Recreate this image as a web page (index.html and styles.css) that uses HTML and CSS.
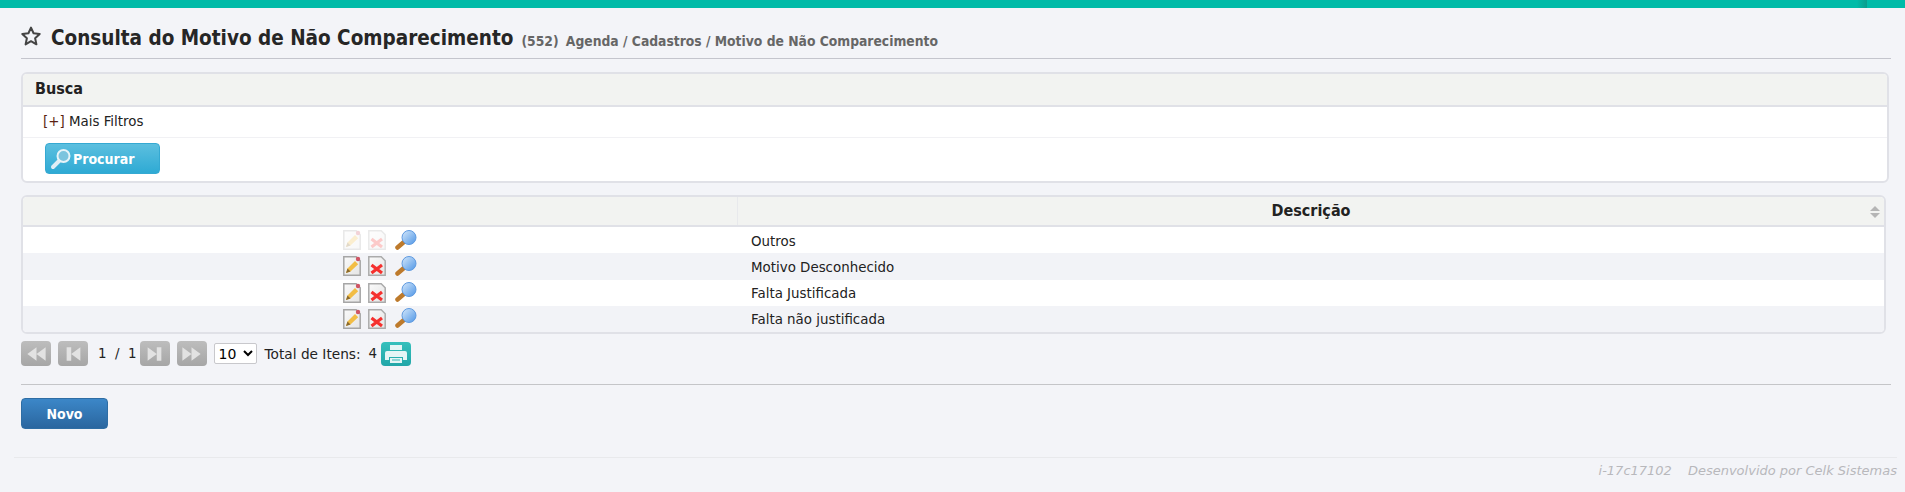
FILE: index.html
```html
<!DOCTYPE html>
<html lang="pt-BR">
<head>
    <meta charset="UTF-8">
    <title>Consulta do Motivo de Não Comparecimento</title>
    <link rel="stylesheet" href="styles.css">
</head>
<body>
    <svg class="defs" width="0" height="0">
        <defs>
            <linearGradient id="glass" x1="0" y1="0" x2="1" y2="1">
                <stop offset="0" stop-color="#d5e8fb"/>
                <stop offset="1" stop-color="#4f96e6"/>
            </linearGradient>
            <linearGradient id="sheet" x1="0" y1="0" x2="1" y2="1">
                <stop offset="0" stop-color="#fafafa"/>
                <stop offset="1" stop-color="#e4e4e4"/>
            </linearGradient>
            <symbol id="ico-edit" viewBox="0 0 18 20">
                <path d="M.8.8h12.400l4 4v14.400H.8z" fill="url(#sheet)" stroke="#a6a6a6" stroke-width="1.500"/>
                <path d="M3 17l1.500-4.500L12 5l3.200 3.200L7.500 15.500z" fill="#f2bd45"/>
                <path d="M3 17l1.500-4.500 3 3z" fill="#8a6a30"/>
                <circle cx="15" cy="3" r="2.200" fill="#cf5564"/>
            </symbol>
            <symbol id="ico-del" viewBox="0 0 18 20">
                <path d="M.8.8h12.400l4 4v14.400H.8z" fill="url(#sheet)" stroke="#ababab" stroke-width="1.500"/>
                <path d="M3.500 9l10.500 8M14 9L3.500 17" stroke="#f5302e" stroke-width="3.200"/>
            </symbol>
            <symbol id="ico-lupa" viewBox="0 0 22 20">
                <path d="M2.500 17.500l7-6" stroke="#bd7a2c" stroke-width="4.500" stroke-linecap="round"/>
                <circle cx="14" cy="7.500" r="7" fill="url(#glass)" stroke="#5f9ae0"/>
            </symbol>
        </defs>
    </svg>

    <div class="topbar"><span class="topbar-mark"></span></div>

    <div class="page">
        <div class="title-row">
            <svg class="star" viewBox="0 0 24 24" width="22" height="22">
                <path d="M12 2.800l2.800 6.200 6.700.8-5 4.600 1.400 6.700L12 17.700 6.100 21.100l1.400-6.700-5-4.600 6.700-.8z" fill="none" stroke="#444" stroke-width="2.200" stroke-linejoin="round"/>
            </svg>
            <h1>Consulta do Motivo de Não Comparecimento</h1>
            <span class="crumbs"><span class="code">(552)</span> Agenda / Cadastros / Motivo de Não Comparecimento</span>
        </div>

        <div class="panel">
            <div class="panel-head">Busca</div>
            <div class="panel-row"><span class="toggle">[+]</span> Mais Filtros</div>
            <div class="panel-actions">
                <button class="btn-search">
                    <svg viewBox="0 0 22 22" width="22" height="22">
                        <path d="M3 19l6-6" stroke="#dfeef5" stroke-width="4" stroke-linecap="round"/>
                        <circle cx="13.500" cy="8" r="6" fill="#7cc4de" stroke="#e6f3f8" stroke-width="2"/>
                    </svg>
                    Procurar
                </button>
            </div>
        </div>

        <div class="grid">
            <div class="grid-head">
                <div class="col-actions"></div>
                <div class="col-desc">
                    Descrição
                    <span class="sort"><i class="up"></i><i class="down"></i></span>
                </div>
            </div>
            <div class="grid-row faded">
                <div class="col-actions">
                    <svg class="ico"><use href="#ico-edit"/></svg>
                    <svg class="ico"><use href="#ico-del"/></svg>
                    <svg class="ico-l"><use href="#ico-lupa"/></svg>
                </div>
                <div class="col-desc">Outros</div>
            </div>
            <div class="grid-row alt">
                <div class="col-actions">
                    <svg class="ico"><use href="#ico-edit"/></svg>
                    <svg class="ico"><use href="#ico-del"/></svg>
                    <svg class="ico-l"><use href="#ico-lupa"/></svg>
                </div>
                <div class="col-desc">Motivo Desconhecido</div>
            </div>
            <div class="grid-row">
                <div class="col-actions">
                    <svg class="ico"><use href="#ico-edit"/></svg>
                    <svg class="ico"><use href="#ico-del"/></svg>
                    <svg class="ico-l"><use href="#ico-lupa"/></svg>
                </div>
                <div class="col-desc">Falta Justificada</div>
            </div>
            <div class="grid-row alt">
                <div class="col-actions">
                    <svg class="ico"><use href="#ico-edit"/></svg>
                    <svg class="ico"><use href="#ico-del"/></svg>
                    <svg class="ico-l"><use href="#ico-lupa"/></svg>
                </div>
                <div class="col-desc">Falta não justificada</div>
            </div>
        </div>

        <div class="pager">
            <span class="pg-btn"><svg viewBox="0 0 20 14" width="23" height="16"><path d="M10 1v12L2 7zM18 1v12L10 7z" fill="#e2e2e2"/></svg></span>
            <span class="pg-btn"><svg viewBox="0 0 20 14" width="23" height="16"><path d="M4 1h4v12H4zM16 1v12L8 7z" fill="#e2e2e2"/></svg></span>
            <span class="pg-num">1 &nbsp;/ &nbsp;1</span>
            <span class="pg-btn"><svg viewBox="0 0 20 14" width="23" height="16"><path d="M4 1v12l8-6zM12 1h4v12h-4z" fill="#e2e2e2"/></svg></span>
            <span class="pg-btn"><svg viewBox="0 0 20 14" width="23" height="16"><path d="M2 1v12l8-6zM10 1v12l8-6z" fill="#e2e2e2"/></svg></span>
            <select class="pg-size"><option>10</option></select>
            <span class="pg-total">Total de Itens:</span>
            <span class="pg-count">4</span>
            <span class="print-btn">
                <svg viewBox="0 0 24 20" width="24" height="20">
                    <path d="M6 1h12v5H6z" fill="#e4f5f5"/>
                    <path d="M3 7h18a2 2 0 0 1 2 2v7h-4v-3H5v3H1V9a2 2 0 0 1 2-2z" fill="#e4f5f5"/>
                    <path d="M6 14h12v5H6z" fill="#e4f5f5"/>
                    <path d="M8 16h8" stroke="#35b5b5"/>
                </svg>
            </span>
        </div>

        <hr class="sep">

        <button class="btn-novo">Novo</button>
    </div>

    <div class="footer">
        <span>i-17c17102</span>
        <span>Desenvolvido por Celk Sistemas</span>
    </div>
</body>
</html>
```

FILE: styles.css
```css
body {
    margin: 0;
    background: #f3f4f8;
    font-family: "DejaVu Sans", sans-serif;
    font-size: 13.400px;
    color: #222;
}
.defs {
    position: absolute;
}
.topbar {
    height: 8px;
    background: #00bba8;
    position: relative;
}
.topbar-mark {
    position: absolute;
    top: 0;
    right: 38px;
    width: 10px;
    height: 8px;
    background: linear-gradient(to right, #00bba8, #0a9c8c);
}
.page {
    padding: 0 14px 0 21px;
}

/* titulo */
.title-row {
    display: flex;
    align-items: center;
    height: 40px;
    padding-top: 10px;
    border-bottom: 1px solid #c4c5cd;
}
.star {
    margin: -5px 8px 0 -1px;
}
h1 {
    margin: 0 8px 0 1px;
    font-size: 20.500px;
    font-weight: bold;
    font-stretch: condensed;
    color: #262626;
}
.crumbs {
    font-size: 13.750px;
    font-weight: bold;
    font-stretch: condensed;
    color: #666;
    padding-top: 6px;
}
.crumbs .code {
    margin-right: 3px;
}

/* busca */
.panel {
    margin-top: 13px;
    margin-right: 2px;
    background: #fff;
    border: 2px solid #e0e1e7;
    border-radius: 6px;
    overflow: hidden;
}
.panel-head {
    height: 31px;
    line-height: 30px;
    padding-left: 12px;
    background: #f2f3f1;
    border-bottom: 2px solid #e0e1e7;
    font-size: 16px;
    font-weight: bold;
    font-stretch: condensed;
}
.panel-row {
    height: 30px;
    line-height: 29px;
    padding-left: 20px;
    border-bottom: 1px solid #f1f1f4;
    color: #222;
}
.toggle {
    color: #5a1f12;
}
.panel-actions {
    height: 43px;
    padding: 5px 0 0 22px;
    box-sizing: border-box;
}
.btn-search {
    display: flex;
    align-items: center;
    gap: 1px;
    width: 115px;
    height: 31px;
    padding: 0 0 0 4px;
    background: linear-gradient(#5cbfdf, #2eaad4);
    border: 1px solid #35a9d2;
    border-radius: 4px;
    color: #fff;
    font-family: inherit;
    font-size: 14px;
    font-weight: bold;
    font-stretch: condensed;
}

/* tabela */
.grid {
    margin-top: 12px;
    margin-right: 5px;
    background: #fff;
    border: 2px solid #e0e1e7;
    border-radius: 6px;
    overflow: hidden;
}
.grid-head {
    display: flex;
    height: 28px;
    line-height: 28px;
    background: #f2f3f1;
    border-bottom: 2px solid #e0e1e7;
    font-size: 16px;
    font-weight: bold;
    font-stretch: condensed;
}
.grid-head .col-desc {
    position: relative;
    text-align: center;
    border-left: 1px solid #e8e9ec;
}
.grid-row {
    display: flex;
    height: 26.250px;
    align-items: center;
}
.grid-row.alt {
    background: #f2f3f7;
}
.grid-row .col-desc {
    padding: 2px 0 0 13px;
    margin-left: 1px;
}
.col-actions {
    display: flex;
    align-items: center;
    width: 714px;
    flex: none;
    padding-left: 320px;
    box-sizing: border-box;
}
.col-desc {
    flex: 1;
}
.ico {
    width: 18px;
    height: 20px;
    margin-right: 7px;
}
.ico-l {
    width: 22px;
    height: 20px;
    margin: -1px 0 0 2px;
}
.faded .ico {
    opacity: 0.25;
}
.sort {
    position: absolute;
    right: 4px;
    top: 9px;
    display: flex;
    flex-direction: column;
    gap: 2px;
}
.sort i {
    display: block;
    width: 0;
    height: 0;
    border-left: 5px solid transparent;
    border-right: 5px solid transparent;
}
.sort .up {
    border-bottom: 5px solid #b5b5b5;
}
.sort .down {
    border-top: 5px solid #b5b5b5;
}

/* paginacao */
.pager {
    display: flex;
    align-items: center;
    height: 25px;
    margin-top: 7px;
}
.pg-btn {
    display: flex;
    align-items: center;
    justify-content: center;
    width: 30px;
    height: 25px;
    margin-right: 7px;
    background: linear-gradient(#bdbdbd, #a6a6a6);
    border-radius: 4px;
}
.pg-num {
    margin: 0 3px 0 3px;
}
.pg-size {
    width: 43px;
    height: 21px;
    margin-right: 8px;
    background: #fff;
    border: 1px solid #c8c8cc;
    border-radius: 2px;
    font-family: inherit;
    font-size: 14px;
}
.pg-total {
    font-size: 13.700px;
    margin-right: 8px;
}
.pg-count {
    margin-right: 4px;
}
.print-btn {
    display: flex;
    align-items: center;
    justify-content: center;
    width: 30px;
    height: 24px;
    background: linear-gradient(#35c0bc, #21a6a8);
    border-radius: 4px;
}

.sep {
    margin: 18px 0 13px;
    border: 0;
    border-top: 1px solid #c4c5c8;
}
.btn-novo {
    display: block;
    width: 87px;
    height: 31px;
    background: linear-gradient(#3c87c8, #2a669f);
    border: 1px solid #2e6da4;
    border-radius: 4px;
    color: #fff;
    font-family: inherit;
    font-size: 14px;
    font-weight: bold;
    font-stretch: condensed;
}

/* rodape */
.footer {
    display: flex;
    justify-content: flex-end;
    gap: 16px;
    margin: 28px 8px 0 14px;
    padding-top: 5px;
    border-top: 1px solid #e8e9ec;
    font-size: 13px;
    font-style: italic;
    color: #b8b8bc;
}
```
